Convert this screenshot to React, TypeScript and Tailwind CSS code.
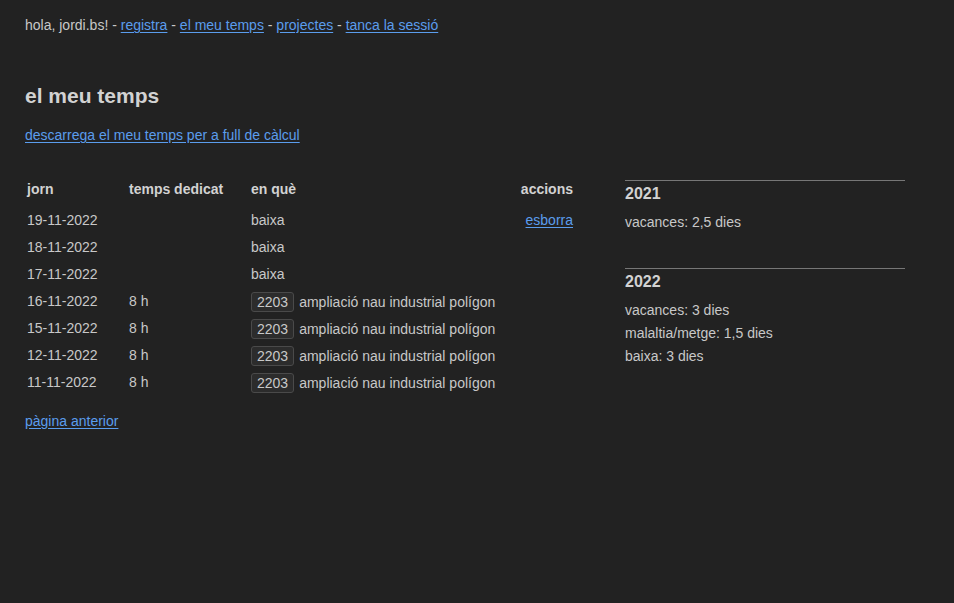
const ROWS = [
  { day: "19-11-2022", hours: "", what: "baixa", project: "", del: true },
  { day: "18-11-2022", hours: "", what: "baixa", project: "", del: false },
  { day: "17-11-2022", hours: "", what: "baixa", project: "", del: false },
  { day: "16-11-2022", hours: "8 h", what: "ampliació nau industrial polígon", project: "2203", del: false },
  { day: "15-11-2022", hours: "8 h", what: "ampliació nau industrial polígon", project: "2203", del: false },
  { day: "12-11-2022", hours: "8 h", what: "ampliació nau industrial polígon", project: "2203", del: false },
  { day: "11-11-2022", hours: "8 h", what: "ampliació nau industrial polígon", project: "2203", del: false },
];

const YEARS = [
  { year: "2021", lines: ["vacances: 2,5 dies"] },
  { year: "2022", lines: ["vacances: 3 dies", "malaltia/metge: 1,5 dies", "baixa: 3 dies"] },
];

const link = "text-[#5b9ded] underline underline-offset-2";

export default function App() {
  return (
    <div className="min-h-[603px] bg-[#222222] px-[25px] pt-[17px] font-['Liberation_Sans',Arial,sans-serif] text-[14px] leading-[17px] text-[#c8c8c8]">
      <nav>
        hola, jordi.bs! - <a href="#" className={link}>registra</a> -{" "}
        <a href="#" className={link}>el meu temps</a> -{" "}
        <a href="#" className={link}>projectes</a> -{" "}
        <a href="#" className={link}>tanca la sessió</a>
      </nav>

      <h1 className="mt-[50px] text-[21px] leading-[24px] font-bold text-[#d2d2d2]">el meu temps</h1>

      <a href="#" className={`${link} mt-[19px] inline-block`}>
        descarrega el meu temps per a full de càlcul
      </a>

      <div className="mt-[32px] flex gap-[50px]">
        <div className="w-[550px]">
          <table className="w-full border-collapse">
            <thead>
              <tr className="text-left font-bold text-[#d2d2d2]">
                <th className="w-[102px] px-[2px] pt-[5px] pb-[9px]">jorn</th>
                <th className="w-[122px] px-[2px] pt-[5px] pb-[9px]">temps dedicat</th>
                <th className="px-[2px] pt-[5px] pb-[9px]">en què</th>
                <th className="px-[2px] pt-[5px] pb-[9px] text-right">accions</th>
              </tr>
            </thead>
            <tbody>
              {ROWS.map((r) => (
                <tr key={r.day} className="h-[27px]">
                  <td className="px-[2px]">{r.day}</td>
                  <td className="px-[2px]">{r.hours}</td>
                  <td className="px-[2px] whitespace-nowrap">
                    {r.project && (
                      <span className="mr-[5px] inline-block rounded-[3px] border border-[#4a4a4a] bg-[#2c2c2c] px-[5px] leading-[18px]">
                        {r.project}
                      </span>
                    )}
                    {r.what}
                  </td>
                  <td className="px-[2px] text-right">
                    {r.del && <a href="#" className={link}>esborra</a>}
                  </td>
                </tr>
              ))}
            </tbody>
          </table>
          <a href="#" className={`${link} mt-[17px] inline-block`}>pàgina anterior</a>
        </div>

        <aside className="w-[280px] pt-[4px]">
          {YEARS.map((y, i) => (
            <section key={y.year} className={i > 0 ? "mt-[37px]" : ""}>
              <div className="border-t border-[#777777] pt-[4px] text-[16px] leading-[18px] font-bold text-[#d2d2d2]">
                {y.year}
              </div>
              <ul className="mt-[11px] space-y-[6px]">
                {y.lines.map((l) => (
                  <li key={l}>{l}</li>
                ))}
              </ul>
            </section>
          ))}
        </aside>
      </div>
    </div>
  );
}
